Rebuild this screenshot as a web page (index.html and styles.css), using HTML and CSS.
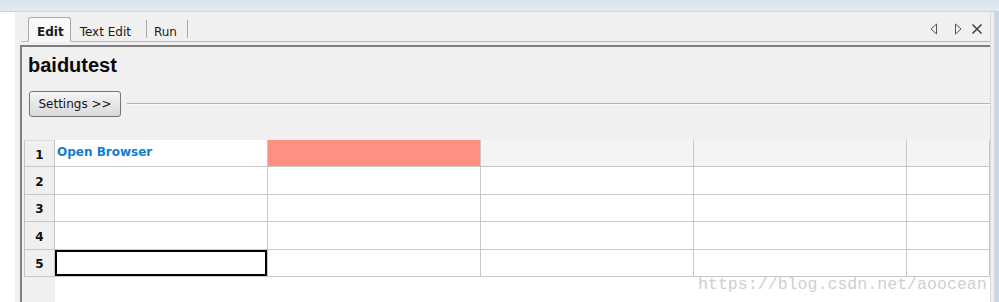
FILE: index.html
```html
<!DOCTYPE html>
<html>
<head>
<meta charset="utf-8">
<link rel="stylesheet" href="styles.css">
</head>
<body>
<div class="topbar"></div>
<div class="frame">
  <div class="gutter"></div>
  <div class="workspace">
    <div class="tabbar">
      <div class="tab active">Edit</div>
      <div class="tab wide">Text Edit</div>
      <div class="sep"></div>
      <div class="tab narrow">Run</div>
      <div class="sep"></div>
      <div class="tabicons">
        <svg width="8" height="12" viewBox="0 0 8 12"><polygon points="6.5,1 1,6 6.5,11" fill="none" stroke="#555" stroke-width="1"/></svg>
        <svg width="8" height="12" viewBox="0 0 8 12"><polygon points="1.5,1 7,6 1.5,11" fill="none" stroke="#555" stroke-width="1"/></svg>
        <svg width="12" height="12" viewBox="0 0 12 12"><path d="M1.5 1.5 L10.5 10.5 M10.5 1.5 L1.5 10.5" stroke="#444" stroke-width="1.6"/></svg>
      </div>
    </div>
    <div class="panel">
      <div class="title">baidutest</div>
      <div class="settings-row">
        <button class="btn">Settings &gt;&gt;</button>
        <div class="rule"></div>
      </div>
      <div class="grid">
        <div class="rh first">1</div>
        <div class="cell kw">Open Browser</div>
        <div class="cell err"></div>
        <div class="cell dim"></div>
        <div class="cell dim"></div>
        <div class="cell dim"></div>

        <div class="rh">2</div>
        <div class="cell"></div><div class="cell"></div><div class="cell"></div><div class="cell"></div><div class="cell"></div>

        <div class="rh">3</div>
        <div class="cell"></div><div class="cell"></div><div class="cell"></div><div class="cell"></div><div class="cell"></div>

        <div class="rh">4</div>
        <div class="cell"></div><div class="cell"></div><div class="cell"></div><div class="cell"></div><div class="cell"></div>

        <div class="rh">5</div>
        <div class="cell selected"></div><div class="cell"></div><div class="cell"></div><div class="cell"></div><div class="cell"></div>

        <div class="fill-head"></div>
        <div class="fill-body"></div>
      </div>
    </div>
  </div>
  <div class="rightedge">
    <div class="re1"></div><div class="re2"></div><div class="re3"></div><div class="re4"></div>
  </div>
</div>
<div class="watermark">https://blog.csdn.net/aoocean</div>
</body>
</html>
```
FILE: styles.css
```css
html, body {
  margin: 0;
  padding: 0;
}
body {
  width: 999px;
  height: 302px;
  overflow: hidden;
  background: #ffffff;
  font-family: "DejaVu Sans", Verdana, sans-serif;
  font-size: 12px;
  color: #111;
  position: relative;
}
.topbar {
  height: 11px;
  background: linear-gradient(#d9e3ee, #e2e9f1);
  border-bottom: 1px solid #cdd6e0;
}
.frame {
  display: flex;
  height: 290px;
}
.gutter {
  width: 15px;
  background: #ffffff;
}
.workspace {
  width: 975px;
  background: #f0f0f0;
  display: flex;
  flex-direction: column;
}
.tabbar {
  height: 29px;
  margin-left: 6px;
  padding-left: 7px;
  padding-right: 7px;
  border-bottom: 1px solid #b9b9b9;
  display: flex;
  align-items: flex-end;
}
.tab {
  height: 24px;
  box-sizing: border-box;
  display: flex;
  align-items: center;
  padding: 4px 12px 0 8px;
  color: #1a1a1a;
  margin-bottom: -1px;
  border-bottom: 1px solid transparent;
}
.tab.wide {
  padding-left: 9px;
  padding-right: 15px;
}
.tab.narrow {
  padding-left: 7px;
  padding-right: 10px;
}
.tab.active {
  height: 25px;
  font-weight: bold;
  padding: 4px 6px 0 8px;
  border: 1px solid #a9a9a9;
  border-bottom: 1px solid #f8f8f8;
  border-radius: 3px 3px 0 0;
  background: linear-gradient(#fbfbfb, #f6f6f6);
}
.sep {
  width: 1px;
  height: 18px;
  background: #a8a8a8;
  align-self: center;
  margin-top: 4px;
}
.tabicons {
  margin-left: auto;
  align-self: center;
  display: flex;
  align-items: center;
  gap: 16px;
  margin-top: 5px;
}
.tabicons svg {
  display: block;
}
.tabicons svg:last-child {
  margin-left: -7px;
}
.panel {
  margin-left: 5px;
  margin-top: 3px;
  border-top: 2px solid #7e7e7e;
  border-left: 2px solid #7e7e7e;
  flex: 1;
  display: flex;
  flex-direction: column;
}
.title {
  font-family: "Liberation Sans", Arial, sans-serif;
  font-weight: bold;
  font-size: 20px;
  line-height: 24px;
  padding: 6px 0 0 6px;
  color: #0a0a0a;
}
.settings-row {
  display: flex;
  align-items: center;
  margin-top: 14px;
  padding-left: 7px;
}
.btn {
  width: 92px;
  height: 26px;
  box-sizing: border-box;
  border: 1px solid #767676;
  border-radius: 3px;
  background: linear-gradient(#f7f7f7, #e6e6e6 50%, #dadada);
  font-family: "DejaVu Sans", Verdana, sans-serif;
  font-size: 12px;
  color: #151515;
  padding: 0;
  margin: 0;
}
.rule {
  flex: 1;
  height: 1px;
  background: #b4b4b4;
  margin-left: 6px;
  border-bottom: 1px solid #f8f8f8;
}
.grid {
  margin-top: 23px;
  margin-left: 2px;
  flex: 1;
  display: grid;
  grid-template-columns: 31px 213px 213px 213px 213px 1fr;
  grid-template-rows: 27px 28px 27px 28px 27px 1fr;
}
.rh {
  box-sizing: border-box;
  background: #f0f0f0;
  border-left: 1px solid #c6c6c6;
  border-right: 1px solid #c6c6c6;
  border-bottom: 1px solid #c6c6c6;
  font-weight: bold;
  font-size: 12px;
  display: flex;
  align-items: center;
  justify-content: center;
  padding-top: 2px;
  color: #111;
}
.rh.first {
  border-top: 1px solid #dcdcdc;
}
.cell {
  box-sizing: border-box;
  background: #ffffff;
  border-right: 1px solid #c8c8c8;
  border-bottom: 1px solid #c8c8c8;
}
.cell.kw {
  color: #0e7fcf;
  font-weight: bold;
  display: flex;
  align-items: center;
  padding-left: 2px;
  padding-bottom: 2px;
}
.cell.err {
  background: #ff8f81;
}
.cell.dim {
  background: #f4f4f4;
}
.cell.selected {
  box-shadow: inset 0 0 0 2px #000000;
}
.fill-head {
  background: #f0f0f0;
}
.fill-body {
  grid-column: 2 / 7;
  background: #ffffff;
}
.rightedge {
  display: flex;
  width: 9px;
}
.re1 { width: 1px; background: #dadada; }
.re2 { width: 3px; background: #eeeeee; }
.re3 { width: 1px; background: #d8d8d8; }
.re4 { width: 4px; background: #c3d7ee; }
.watermark {
  position: absolute;
  left: 698px;
  top: 275px;
  font-family: "Liberation Mono", "Courier New", monospace;
  font-size: 16.6px;
  line-height: 20px;
  color: #cfcfcf;
  white-space: nowrap;
}
```
